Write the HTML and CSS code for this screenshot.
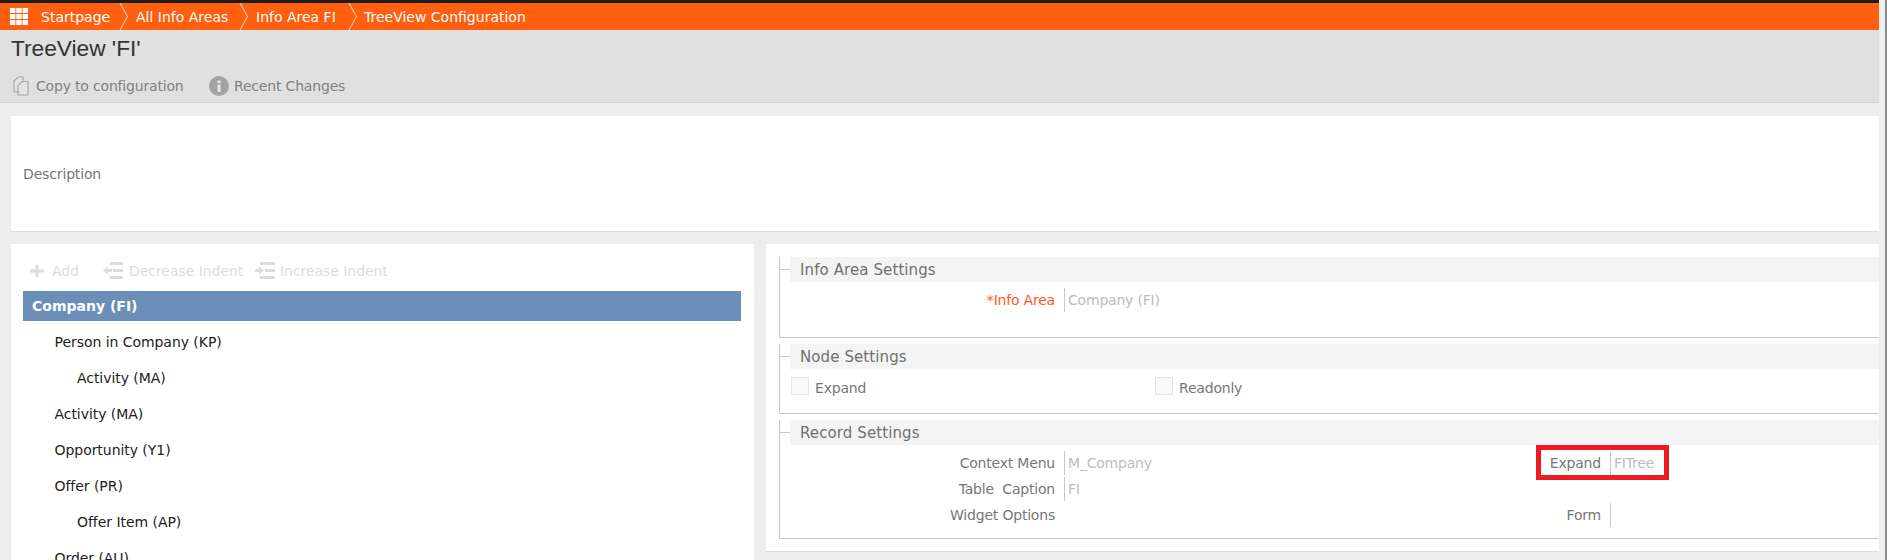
FILE: index.html
```html
<!DOCTYPE html>
<html lang="en">
<head>
<meta charset="utf-8">
<title>TreeView 'FI'</title>
<link rel="stylesheet" href="styles.css">
</head>
<body>
<div class="page">
  <div class="main">
    <nav class="crumbs">
      <svg class="apps" width="18" height="17" viewBox="0 0 18 17"><g fill="#fff"><rect x="0" y="0" width="5.400" height="5"/><rect x="6.300" y="0" width="5.400" height="5"/><rect x="12.600" y="0" width="5.400" height="5"/><rect x="0" y="6" width="5.400" height="5"/><rect x="6.300" y="6" width="5.400" height="5"/><rect x="12.600" y="6" width="5.400" height="5"/><rect x="0" y="12" width="5.400" height="5"/><rect x="6.300" y="12" width="5.400" height="5"/><rect x="12.600" y="12" width="5.400" height="5"/></g></svg>
      <span class="crumb c1">Startpage</span>
      <svg class="chev" width="10" height="27" viewBox="0 0 10 27"><path d="M1 0 L8.500 13.500 L1 27" fill="none" stroke="#ffc4a0" stroke-width="1.200"/></svg>
      <span class="crumb c2">All Info Areas</span>
      <svg class="chev" width="10" height="27" viewBox="0 0 10 27"><path d="M1 0 L8.500 13.500 L1 27" fill="none" stroke="#ffc4a0" stroke-width="1.200"/></svg>
      <span class="crumb c3">Info Area FI</span>
      <svg class="chev" width="10" height="27" viewBox="0 0 10 27"><path d="M1 0 L8.500 13.500 L1 27" fill="none" stroke="#ffc4a0" stroke-width="1.200"/></svg>
      <span class="crumb c4">TreeView Configuration</span>
    </nav>
    <header class="head">
      <h1 class="title">TreeView 'FI'</h1>
      <div class="actions">
        <span class="action a1">
          <svg width="16" height="20" viewBox="0 0 16 20"><g fill="#e4e4e4" stroke="#a8a8a8" stroke-width="1.200"><path d="M1 5 L5 1 H10 V16 H1 Z"/><path d="M5 9.500 L9 5.500 H15 V19 H5 Z"/></g></svg>
          Copy to configuration
        </span>
        <span class="action">
          <svg width="20" height="20" viewBox="0 0 20 20"><circle cx="10" cy="10" r="10" fill="#a3a3a3"/><rect x="8.500" y="8.500" width="3" height="7.500" fill="#e8e8e8"/><rect x="8.500" y="4.500" width="3" height="2.600" fill="#e8e8e8"/></svg>
          Recent Changes
        </span>
      </div>
    </header>
    <section class="desc"><span class="desc-label">Description</span></section>
    <div class="columns">
      <section class="tree-panel">
        <div class="toolbar">
          <span class="tool t1"><svg width="14" height="12" viewBox="0 0 14 12"><path d="M5.500 0h3v4.500H14v3H8.500V12h-3V7.500H0v-3h5.500z" fill="#dcdcdc"/></svg>Add</span>
          <span class="tool t2"><svg width="20" height="20" viewBox="0 0 20 20"><g fill="#dcdcdc"><rect x="7" y="1" width="13" height="3"/><rect x="10" y="8" width="10" height="3"/><rect x="7" y="15" width="13" height="3"/><path d="M0 9.500 L5 5.500 V8 H9 V11 H5 V13.500 Z"/></g></svg>Decrease Indent</span>
          <span class="tool t3"><svg width="20" height="20" viewBox="0 0 20 20"><g fill="#dcdcdc"><rect x="5" y="1" width="15" height="3"/><rect x="10" y="8" width="10" height="3"/><rect x="5" y="15" width="15" height="3"/><path d="M9 9.500 L4 5.500 V8 H0 V11 H4 V13.500 Z"/></g></svg>Increase Indent</span>
        </div>
        <ul class="tree">
          <li class="node selected">Company (FI)</li>
          <li class="node lvl1">Person in Company (KP)</li>
          <li class="node lvl2">Activity (MA)</li>
          <li class="node lvl1">Activity (MA)</li>
          <li class="node lvl1">Opportunity (Y1)</li>
          <li class="node lvl1">Offer (PR)</li>
          <li class="node lvl2">Offer Item (AP)</li>
          <li class="node lvl1">Order (AU)</li>
        </ul>
      </section>
      <section class="settings-panel">
        <div class="group g-info">
          <h2 class="legend">Info Area Settings</h2>
          <div class="form-row">
            <span class="label required">*Info Area</span><span class="value">Company (FI)</span>
          </div>
        </div>
        <div class="group g-node">
          <h2 class="legend">Node Settings</h2>
          <div class="checks">
            <label class="check c-a"><span class="box"></span><span class="check-text">Expand</span></label>
            <label class="check"><span class="box"></span><span class="check-text">Readonly</span></label>
          </div>
        </div>
        <div class="group g-record">
          <h2 class="legend">Record Settings</h2>
          <div class="record-grid">
            <div class="form-row"><span class="label">Context Menu</span><span class="value">M_Company</span></div>
            <div class="form-row"><span class="label">Expand</span><span class="value">FITree</span><span class="mark"></span></div>
            <div class="form-row"><span class="label">Table&nbsp; Caption</span><span class="value">FI</span></div>
            <div class="form-row"></div>
            <div class="form-row"><span class="label">Widget Options</span></div>
            <div class="form-row"><span class="label">Form</span><span class="value"></span></div>
          </div>
        </div>
      </section>
    </div>
  </div>
  <div class="scrollbar"></div>
</div>
</body>
</html>
```
FILE: styles.css
```css
* { box-sizing: border-box; }
html, body { margin: 0; padding: 0; height: 560px; overflow: hidden; }
body { background: #ededed; font-family: "DejaVu Sans", sans-serif; font-size: 14px; color: #777; }
.page { display: flex; height: 560px; }
.main { width: 1879px; flex: none; border-top: 3px solid #1d1d1b; }
.scrollbar { flex: 1; background: #f0f0f0; border-right: 2px solid #8b8b8b; margin-left: 1px; }

.crumbs { height: 27px; background: #ff5f0f; display: flex; align-items: center; padding-left: 10px; color: #fff; }
.apps { flex: none; margin-right: 14px; }
.chev { flex: none; }
.crumb { white-space: nowrap; }
.c1 { width: 77px; margin-left: -1px; margin-right: 1px; }
.c2 { width: 102px; margin-left: 7px; margin-right: 1px; }
.c3 { width: 92px; margin-left: 7px; }
.c4 { margin-left: 6px; }

.head { height: 73px; background: #e0e0e0; border-bottom: 1px solid #d4d4d4; padding-left: 11px; }
.title { margin: 0; font: 400 22.700px/24px "Liberation Sans", sans-serif; color: #333; padding-top: 6px; height: 39px; }
.actions { display: flex; align-items: center; height: 21px; margin-top: 6px; padding-left: 2px; color: #808080; letter-spacing: -0.18px; }
.action { display: inline-flex; align-items: center; gap: 5px; white-space: nowrap; }
.a1 { width: 196px; gap: 7px; }

.desc { margin: 13px 0 0 11px; height: 116px; background: #fff; border-bottom: 1px solid #dcdcdc; display: flex; align-items: center; padding-left: 12px; letter-spacing: -0.15px; }
.desc-label { margin-top: 1px; }

.columns { display: flex; gap: 12px; margin: 12px 0 0 11px; }
.tree-panel { width: 743px; height: 330px; background: #fff; padding: 0 13px 0 12px; overflow: hidden; }
.toolbar { height: 47px; display: flex; align-items: center; color: #dcdcdc; padding: 7px 0 0 7px; letter-spacing: -0.05px; }
.tool { display: inline-flex; align-items: center; white-space: nowrap; }
.t1 { gap: 8px; width: 73px; }
.t2 { gap: 6px; width: 152px; }
.t3 { gap: 5px; }
.tree { list-style: none; margin: 0; padding: 0; color: #222; letter-spacing: -0.05px; }
.node { height: 36px; line-height: 36px; white-space: nowrap; }
.selected { height: 30px; line-height: 30px; margin-bottom: 3px; background: #6b8fb9; color: #fff; font-weight: 700; padding-left: 9px; letter-spacing: 0; }
.lvl1 { padding-left: 31.500px; }
.lvl2 { padding-left: 54px; }

.settings-panel { width: 1113px; height: 308px; background: #fff; border-bottom: 1px solid #dcdcdc; padding: 13px 0 0 13px; }
.group { position: relative; padding-left: 10px; border-left: 1px solid #c8c8c8; border-bottom: 1px solid #c8c8c8; margin-top: 6px; }
.group:first-child { margin-top: 0; }
.group::before { content: ""; position: absolute; left: 0; top: 12px; width: 10px; height: 1px; background: #c8c8c8; }
.legend { margin: 0; height: 25px; line-height: 26px; background: #f4f4f4; font-size: 15px; font-weight: 400; color: #707070; padding-left: 10px; letter-spacing: 0.1px; }
.g-info { height: 81px; }
.g-node { height: 70px; }
.g-record { height: 119px; }

.form-row { display: flex; align-items: center; height: 26px; position: relative; letter-spacing: -0.2px; }
.label { width: 274px; text-align: right; padding-right: 9px; flex: none; white-space: nowrap; }
.value { border-left: 1px solid #c8c8c8; height: 24px; line-height: 24px; padding-left: 3px; color: #bcbcbc; white-space: nowrap; }
.required { color: #ff5a24; }
.g-info .form-row { margin-top: 5px; }

.checks { display: flex; padding-top: 8px; padding-left: 1px; }
.check { display: inline-flex; align-items: flex-start; gap: 6px; letter-spacing: -0.2px; }
.check-text { line-height: 18px; margin-top: 2px; }
.c-a { width: 364px; }
.box { width: 18px; height: 18px; border: 1px solid #e6e6e6; background: #fafafa; }

.record-grid { display: grid; grid-template-columns: 546px 1fr; grid-auto-rows: 26px; padding-top: 5px; }
.mark { position: absolute; left: 200px; top: -5px; width: 133px; height: 35px; border: 5px solid #ed1c24; }
```
